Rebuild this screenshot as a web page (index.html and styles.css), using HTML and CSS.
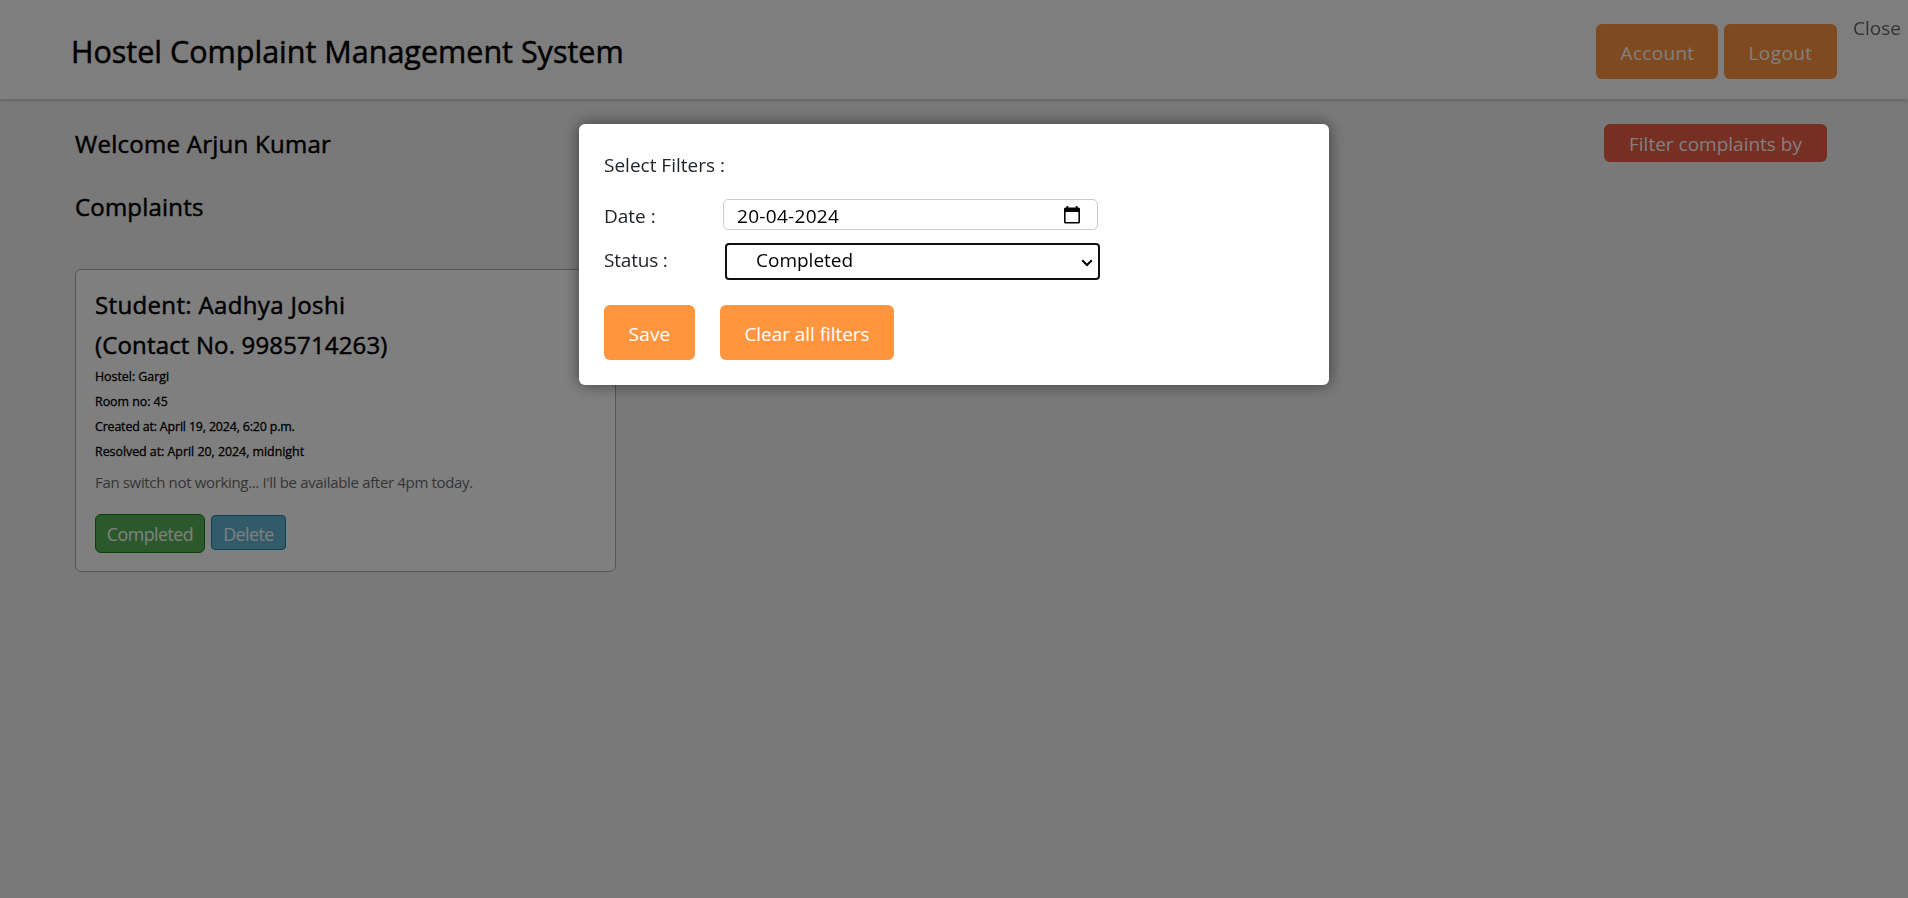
FILE: index.html
```
<!DOCTYPE html>
<html lang="en">
<head>
<meta charset="utf-8">
<title>Hostel Complaint Management System</title>
<link rel="stylesheet" href="styles.css">
</head>
<body>
<header class="topbar">
  <h1 class="brand">Hostel Complaint Management System</h1>
  <nav class="nav">
    <a class="btn account">Account</a>
    <a class="btn logout">Logout</a>
  </nav>
</header>
<main class="page">
  <div class="welcome-row">
    <h2 class="heading">Welcome Arjun Kumar</h2>
    <a class="filter-btn">Filter complaints by</a>
  </div>
  <h2 class="heading complaints">Complaints</h2>
  <section class="card">
    <h3 class="student">Student: Aadhya Joshi</h3>
    <h3 class="contact">(Contact No. 9985714263)</h3>
    <p class="meta hostel">Hostel: Gargi</p>
    <p class="meta room">Room no: 45</p>
    <p class="meta">Created at: April 19, 2024, 6:20 p.m.</p>
    <p class="meta resolved">Resolved at: April 20, 2024, midnight</p>
    <p class="desc">Fan switch not working... I'll be available after 4pm today.</p>
    <div class="actions">
      <a class="tag done">Completed</a>
      <a class="tag delete">Delete</a>
    </div>
  </section>
</main>
<div class="overlay">
  <span class="close">Close</span>
  <div class="modal">
    <p class="modal-title">Select Filters :</p>
    <div class="row date-row">
      <span class="label">Date :</span>
      <div class="date-field">
        <span>20-04-2024</span>
        <svg width="16" height="18" viewBox="0 0 16 18"><path fill="#000" fill-rule="evenodd" d="M2.5 0h1.8v1.5h7.4V0h1.8v1.5H14.5Q16 1.5 16 3v13q0 1.500-1.500 1.500h-13Q0 17.500 0 16V3Q0 1.500 1.500 1.500h1zM1.600 6v9.900h12.800V6z"/></svg>
      </div>
    </div>
    <div class="row status-row">
      <span class="label status">Status :</span>
      <div class="select-field">
        <span>Completed</span>
        <svg width="12" height="8" viewBox="0 0 12 8"><path d="M1.200 1.200L6 6l4.800-4.800" fill="none" stroke="#000" stroke-width="2"/></svg>
      </div>
    </div>
    <div class="modal-actions">
      <a class="btn save">Save</a>
      <a class="btn clear">Clear all filters</a>
    </div>
  </div>
</div>
</body>
</html>
```
FILE: styles.css
```
* { box-sizing: border-box; margin: 0; padding: 0; }
body {
  height: 898px;
  overflow: hidden;
  background: #f2f2f2;
  color: #000;
  font: 19px/24px "Open Sans", "Noto Sans", sans-serif;
}
a, span, p, h1, h2, h3 { white-space: nowrap; }
h1, h2, h3 { -webkit-text-stroke: .5px #000; }
.topbar {
  display: flex;
  justify-content: space-between;
  align-items: flex-start;
  height: 99px;
  padding: 24px 71px 0 71px;
  background: #fcfcfc;
  box-shadow: 0 1px 4px rgba(0, 0, 0, .22);
}
.brand { font-size: 30.5px; font-weight: 500; line-height: 54px; }
.nav { display: flex; gap: 6px; }
.btn {
  display: flex;
  justify-content: center;
  height: 55px;
  border-radius: 6px;
  background: #ff953f;
  color: #fff;
  line-height: 58px;
}
.account { width: 122px; padding-left: 1px; letter-spacing: .3px; }
.logout { width: 113px; letter-spacing: .4px; }
.page { padding: 25px 81px 0 75px; }
.welcome-row { display: flex; justify-content: space-between; height: 38px; }
.heading { font-size: 24px; font-weight: 500; line-height: 40px; letter-spacing: .27px; }
.filter-btn {
  width: 223px;
  height: 38px;
  border-radius: 6px;
  background: #ee5c46;
  color: #fff;
  line-height: 40px;
  text-align: center;
}
.complaints { margin-top: 25px; letter-spacing: .2px; }
.card {
  width: 541px;
  height: 303px;
  margin-top: 42px;
  padding: 15px 19px;
  border: 1px solid #acacac;
  border-radius: 6px;
  background: #fff;
}
.student, .contact { font-size: 24px; font-weight: 500; line-height: 40px; }
.student { letter-spacing: .35px; }
.contact { height: 39px; letter-spacing: .15px; }
.meta { font-size: 12.4px; font-weight: 500; line-height: 25px; letter-spacing: -.15px; -webkit-text-stroke: .3px #000; }
.hostel, .room, .resolved { letter-spacing: -.02px; }
.desc {
  margin-top: 6px;
  color: #6b6b6b;
  font-size: 15px;
  line-height: 25px;
  letter-spacing: -.34px;
}
.actions { display: flex; align-items: flex-start; gap: 6px; margin-top: 19px; }
.tag {
  border: 1px solid #0c840c;
  color: #fff;
  font-size: 17.8px;
  letter-spacing: -.5px;
  text-align: center;
}
.done { width: 110px; height: 39px; border-radius: 6px; background: #59b359; line-height: 38px; }
.delete { width: 75px; height: 35px; margin-top: 1px; border-color: #0b8aa8; border-radius: 4px; background: #66b5d3; line-height: 36px; }
.overlay {
  position: fixed;
  inset: 0;
  padding-top: 124px;
  background: rgba(0, 0, 0, .5);
}
.close { position: absolute; top: 16px; right: 7px; color: #333; }
.modal {
  width: 750px;
  height: 261px;
  margin: 0 auto;
  padding: 29px 25px 0;
  border-radius: 6px;
  background: #fff;
  box-shadow: 0 0 15px rgba(0, 0, 0, .5);
  color: #212529;
}
.modal-title { line-height: 24px; }
.row { display: flex; align-items: flex-start; }
.date-row { height: 33px; margin-top: 22px; }
.status-row { margin-top: 11px; }
.label { width: 119px; line-height: 34px; }
.status { width: 121px; letter-spacing: -.2px; }
.date-field, .select-field { display: flex; justify-content: space-between; width: 375px; color: #000; }
.date-field {
  height: 31px;
  padding: 0 17px 0 13px;
  border: 1px solid #ccc;
  border-radius: 5px;
  line-height: 32px;
  letter-spacing: .3px;
}
.date-field svg { margin-top: 6px; }
.select-field {
  height: 37px;
  padding: 0 5px 0 29px;
  border: 2px solid #101010;
  border-radius: 4px;
  line-height: 30px;
}
.select-field svg { margin-top: 14px; }
.modal-actions { display: flex; gap: 25px; margin-top: 25px; }
.save { width: 91px; letter-spacing: .2px; }
.clear { width: 174px; letter-spacing: -.05px; }
```
